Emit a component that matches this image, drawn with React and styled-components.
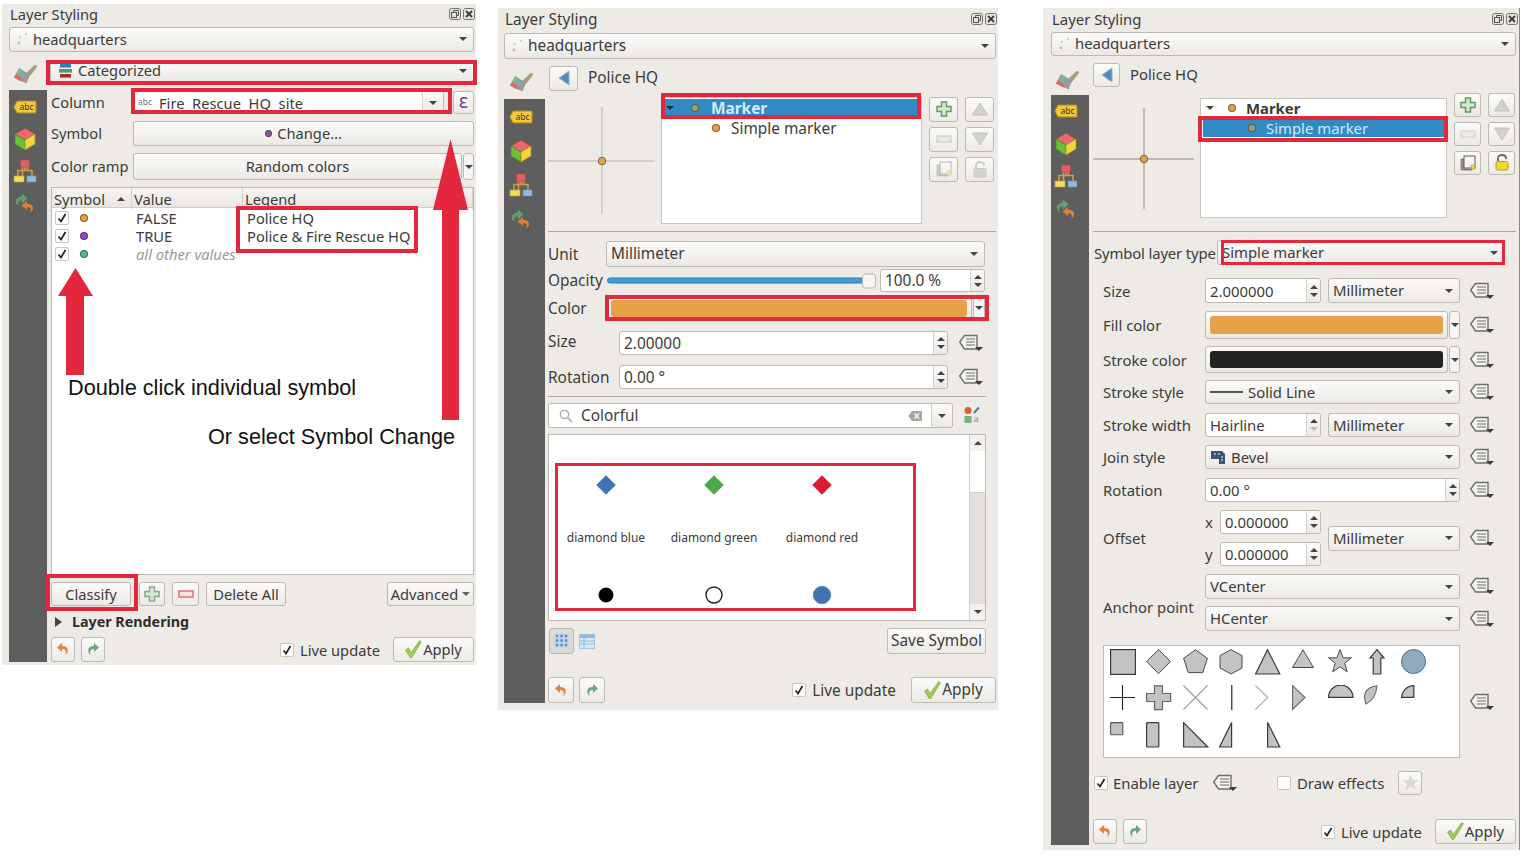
import React from 'react';
import styled, { createGlobalStyle } from 'styled-components';

const Global = createGlobalStyle`
  html, body { margin: 0; padding: 0; background: #ffffff; }
  body { font-family: "Noto Sans", "Open Sans", sans-serif; font-size: 14px; color: #3c3b37; }
  * { box-sizing: border-box; }
`;

const RED = '#e3273d';
const BORDER = '#bcb9b2';

const Canvas = styled.div`
  position: relative;
  width: 1527px;
  height: 863px;
  overflow: hidden;
`;

// each panel is a window on the free canvas
const Window = styled.section`
  position: absolute;
  left: ${p => p.$left}px;
  top: ${p => p.$top}px;
  width: ${p => p.$w}px;
  height: ${p => p.$h}px;
  padding: 0 ${p => p.$pr}px 0 ${p => p.$pl}px;
  background: #eeebe7;
  font-size: ${p => p.$fs}px;
  border-right: ${p => (p.$edge ? '1px solid #8d8a85' : 'none')};
`;

const TitleBar = styled.header`
  display: flex;
  align-items: center;
  justify-content: space-between;
  height: ${p => p.$h}px;
  padding-left: 1px;
  padding-bottom: 3px;
  color: #3c3b37;
`;

const DockIcons = styled.div`
  display: flex;
  gap: 2px;
  margin-right: ${p => p.$mr || 0}px;
`;

const Main = styled.div`
  display: grid;
  grid-template-columns: ${p => p.$side}px 1fr;
  grid-template-rows: ${p => p.$head}px auto;
  column-gap: ${p => p.$gap}px;
`;

const BrushCell = styled.div`
  display: flex;
  justify-content: center;
  padding-top: ${p => p.$top}px;
  padding-right: ${p => p.$shift}px;
`;

const Sidebar = styled.nav`
  display: flex;
  flex-direction: column;
  align-items: center;
  height: ${p => p.$h}px;
  margin-top: ${p => p.$mt || 0}px;
  padding-top: ${p => p.$pt}px;
  padding-right: ${p => p.$shift}px;
  background: #5e5e5e;
`;

const SideSlot = styled.div`
  display: flex;
  align-items: center;
  justify-content: center;
  height: ${p => p.$h}px;
`;

const Content = styled.div`
  display: flex;
  flex-direction: column;
  min-width: 0;
`;

const Row = styled.div`
  display: flex;
  align-items: stretch;
  height: ${p => p.$h}px;
  margin-top: ${p => p.$mt || 0}px;
  margin-right: ${p => p.$mr || 0}px;
  margin-left: ${p => p.$ml || 0}px;
  gap: ${p => p.$gap || 0}px;
`;

const Label = styled.div`
  display: flex;
  align-items: center;
  flex: none;
  width: ${p => (p.$w ? `${p.$w}px` : 'auto')};
  padding-bottom: ${p => p.$pb || 0}px;
  padding-top: ${p => p.$pt || 0}px;
  letter-spacing: ${p => p.$ls || 0}px;
  white-space: nowrap;
  color: #3c3b37;
`;

const Combo = styled.div`
  display: flex;
  align-items: center;
  flex: ${p => (p.$w ? 'none' : 1)};
  width: ${p => (p.$w ? `${p.$w}px` : 'auto')};
  min-width: 0;
  height: ${p => (p.$h ? `${p.$h}px` : 'auto')};
  padding: 0 6px ${p => p.$pb || 0}px ${p => p.$pl || 4}px;
  margin-left: ${p => p.$ml || 0}px;
  gap: ${p => p.$gap || 5}px;
  border: 1px solid ${BORDER};
  border-radius: 3px;
  background: linear-gradient(#fbfbfa, #ece9e5);
  white-space: nowrap;
  color: #3c3b37;
`;

const ComboText = styled.span`
  flex: 1;
  overflow: hidden;
  line-height: 1.5;
`;

const Caret = styled.i`
  flex: none;
  width: 0;
  height: 0;
  border-left: 4px solid transparent;
  border-right: 4px solid transparent;
  border-top: 4px solid ${p => p.$c || '#45433e'};
`;

const CaretUp = styled.i`
  flex: none;
  width: 0;
  height: 0;
  border-left: 4px solid transparent;
  border-right: 4px solid transparent;
  border-bottom: 4px solid ${p => p.$c || '#45433e'};
`;

const Btn = styled.div`
  display: flex;
  align-items: center;
  justify-content: center;
  flex: ${p => (p.$w ? 'none' : 1)};
  width: ${p => (p.$w ? `${p.$w}px` : 'auto')};
  margin-left: ${p => p.$ml || 0}px;
  padding-bottom: 1px;
  gap: ${p => p.$gap || 4}px;
  border: 1px solid ${BORDER};
  border-radius: 3px;
  background: ${p => (p.$on ? '#dcdad6' : 'linear-gradient(#fbfbfa, #ece9e5)')};
  white-space: nowrap;
  color: #3c3b37;
`;

const EpsilonBtn = styled(Btn)`
  font-size: 20px;
  line-height: 1;
  padding-bottom: 3px;
  color: #6e4c8e;
`;

const IconGrid = styled.div`
  display: grid;
  grid-template-columns: repeat(2, ${p => p.$w}px);
  grid-auto-rows: ${p => p.$h}px;
  column-gap: 7px;
  row-gap: ${p => p.$gap}px;
  margin-left: 7px;
`;

const SpinBox = styled.div`
  display: flex;
  flex: ${p => (p.$w ? 'none' : 1)};
  width: ${p => (p.$w ? `${p.$w}px` : 'auto')};
  min-width: 0;
  margin-left: ${p => p.$ml || 0}px;
  border: 1px solid ${BORDER};
  border-radius: 3px;
  background: #ffffff;
  color: #3c3b37;
`;

const SpinText = styled.div`
  display: flex;
  align-items: center;
  flex: 1;
  padding-left: 4px;
  gap: ${p => p.$gap || 0}px;
  white-space: pre;
`;

const SpinArrows = styled.div`
  display: flex;
  flex-direction: column;
  align-items: center;
  justify-content: center;
  gap: 4px;
  flex: none;
  width: 14px;
  border-left: 1px solid #d5d2cc;
  background: linear-gradient(#fbfbfa, #ece9e5);
  border-radius: 0 3px 3px 0;
`;

const ColorBtn = styled.div`
  display: flex;
  flex: 1;
  padding: ${p => p.$pad || '4px'};
  border: 1px solid ${BORDER};
  border-radius: 3px;
  background: linear-gradient(#fbfbfa, #ece9e5);
`;

const Swatch = styled.div`
  flex: 1;
  border-radius: 3px;
  background: ${p => p.$c};
`;

const ColorDrop = styled.div`
  display: flex;
  align-items: center;
  justify-content: center;
  flex: none;
  width: ${p => p.$w}px;
  margin-left: 1px;
  border: 1px solid ${BORDER};
  border-radius: 3px;
  background: #f6f5f3;
`;

const DdSlot = styled.div`
  display: flex;
  align-items: center;
  flex: none;
  margin-left: ${p => p.$ml || 10}px;
`;

const Check = styled.span`
  display: inline-flex;
  align-items: center;
  justify-content: center;
  flex: none;
  width: 14px;
  height: 14px;
  margin-left: ${p => p.$ml || 0}px;
  border: 1px solid #c9c6c0;
  border-radius: 2px;
  background: #ffffff;
`;

const Footer = styled(Row)`
  align-items: stretch;
`;

const FooterSpacer = styled.div`
  flex: 1;
`;

const LiveLabel = styled.label`
  display: flex;
  align-items: center;
  gap: 6px;
  margin-right: ${p => p.$mr}px;
  white-space: nowrap;
  color: #3c3b37;
`;

const Separator = styled.hr`
  height: 1px;
  margin: ${p => p.$mt}px ${p => p.$mr || 0}px 0 0;
  border: 0;
  background: #aaa8a3;
`;

/* categorized table */
const Table = styled.div`
  height: 388px;
  margin-top: 7px;
  border: 1px solid ${BORDER};
  background: #ffffff;
`;

const TableHead = styled.div`
  display: grid;
  grid-template-columns: 80px 111px 1fr;
  height: 20px;
  background: linear-gradient(#f6f5f3, #e9e6e2);
  border-bottom: 1px solid #cfccc6;
`;

const HeadCell = styled.div`
  display: flex;
  align-items: center;
  justify-content: space-between;
  padding: 1px 6px 0 2px;
  border-right: 1px solid #d5d2cc;
`;

const TableRow = styled.div`
  display: grid;
  grid-template-columns: 80px 111px 1fr;
  height: 18px;
  align-items: center;
`;

const SymbolCell = styled.div`
  display: flex;
  align-items: center;
  gap: 11px;
  padding-left: 3px;
`;

const ValueCell = styled.div`
  padding-left: 4px;
  white-space: nowrap;
  font-style: ${p => (p.$muted ? 'italic' : 'normal')};
  color: ${p => (p.$muted ? '#9b9994' : '#3c3b37')};
`;

const Dot = styled.span`
  display: inline-block;
  flex: none;
  width: ${p => p.$s || 7}px;
  height: ${p => p.$s || 7}px;
  margin-left: ${p => p.$ml || 0}px;
  border-radius: 50%;
  border: 1px solid rgba(50, 40, 30, 0.55);
  background: ${p => p.$c};
`;

const Section = styled.div`
  display: flex;
  align-items: center;
  gap: 10px;
  padding-left: 4px;
  padding-bottom: 1px;
  font-weight: 700;
  font-size: 14.3px;
  color: #2f2e2a;
`;

const TriRight = styled.i`
  width: 0;
  height: 0;
  border-top: 5px solid transparent;
  border-bottom: 5px solid transparent;
  border-left: 7px solid #45433e;
`;

/* symbol tree */
const TopBlock = styled.div`
  display: flex;
  align-items: flex-start;
`;

const Preview = styled.div`
  flex: none;
  width: ${p => p.$w}px;
  height: ${p => p.$h}px;
  margin-top: ${p => p.$mt}px;
`;

const Tree = styled.div`
  flex: none;
  width: ${p => p.$w}px;
  height: ${p => p.$h}px;
  margin-top: ${p => p.$mt || 0}px;
  margin-left: 6px;
  padding-top: ${p => p.$pt}px;
  border: 1px solid #c9c6c0;
  background: #ffffff;
`;

const TreeRow = styled.div`
  display: flex;
  align-items: center;
  height: ${p => p.$h}px;
  margin: ${p => p.$m || 0};
  padding-left: ${p => p.$pl}px;
  gap: ${p => p.$gap || 8}px;
  background: ${p => (p.$sel ? '#2f8ac6' : 'transparent')};
  color: ${p => (p.$sel ? '#d5eafa' : '#3c3b37')};
  font-weight: ${p => (p.$bold ? 700 : 400)};
`;

const TreeName = styled.span`
  margin-left: ${p => p.$ml}px;
`;

/* symbol list */
const SearchIcons = styled.div`
  display: flex;
  align-items: center;
  gap: 8px;
  flex: 1;
  padding: 0 8px 0 10px;
`;

const SearchDrop = styled.div`
  display: flex;
  align-items: center;
  justify-content: center;
  flex: none;
  width: 21px;
  border-left: 1px solid #d5d2cc;
  background: linear-gradient(#fbfbfa, #ece9e5);
  border-radius: 0 3px 3px 0;
`;

const SymbolList = styled.div`
  display: flex;
  height: 187px;
  margin-top: 6px;
  margin-right: 10px;
  border: 1px solid ${BORDER};
  background: #ffffff;
  overflow: hidden;
`;

const SymbolGrid = styled.div`
  flex: 1;
  display: grid;
  grid-template-columns: repeat(3, 108px);
  align-content: start;
  row-gap: 38px;
  padding: 40px 0 0 3px;
`;

const SymbolCellBox = styled.div`
  display: flex;
  flex-direction: column;
  align-items: center;
`;

const SymbolName = styled.div`
  height: 18px;
  margin-top: 34px;
  font-size: 12px;
  line-height: 18px;
  white-space: nowrap;
`;

const Scroll = styled.div`
  display: flex;
  flex-direction: column;
  flex: none;
  width: 16px;
  border-left: 1px solid #d5d2cc;
  background: #e2e0dc;
`;

const ScrollEnd = styled.div`
  display: flex;
  align-items: center;
  justify-content: center;
  height: 16px;
  background: #f3f2f0;
`;

const ScrollThumb = styled.div`
  height: 42px;
  background: #ffffff;
  border-bottom: 1px solid #cfccc6;
`;

const ScrollTrack = styled.div`
  flex: 1;
`;

/* marker properties */
const PropRow = styled.div`
  display: grid;
  grid-template-columns: 102px 255px 34px;
  align-items: stretch;
  height: ${p => p.$h}px;
  margin-top: ${p => p.$mt}px;
  margin-left: 10px;
`;

const Fields = styled.div`
  display: flex;
  gap: ${p => p.$gap || 0}px;
  min-width: 0;
`;

const FieldStack = styled.div`
  display: flex;
  flex-direction: column;
  justify-content: space-between;
  width: 116px;
  flex: none;
`;

const StackRow = styled.div`
  display: flex;
  height: 24px;
`;

const StackLetter = styled.span`
  display: flex;
  align-items: center;
  width: 15px;
`;

const ColumnStack = styled.div`
  display: flex;
  flex-direction: column;
  justify-content: space-between;
`;

const StackedField = styled.div`
  display: flex;
  height: 25px;
`;

const CenterUnit = styled.div`
  display: flex;
  align-items: center;
  flex: 1;
  margin-left: 7px;
`;

const DdColumn = styled.div`
  display: flex;
  flex-direction: column;
  justify-content: space-between;
  padding: 3px 0;
  margin-left: 10px;
`;

const ShapeGrid = styled.div`
  display: grid;
  grid-template-columns: repeat(9, 36.33px);
  grid-auto-rows: 36.33px;
  flex: none;
  width: 357px;
  padding: 3px 0 0 6px;
  border: 1px solid ${BORDER};
  background: #ffffff;
`;

const EnableRow = styled(Row)`
  align-items: center;
  padding-left: 1px;
`;

const OptionText = styled.span`
  flex: none;
  width: ${p => p.$w}px;
  margin-left: ${p => p.$ml || 0}px;
  white-space: nowrap;
`;

const SmallBtn = styled(Btn)`
  height: 24px;
`;

/* red annotations drawn over the panels */
const Highlight = styled.div`
  position: absolute;
  left: ${p => p.$x}px;
  top: ${p => p.$y}px;
  width: ${p => p.$w}px;
  height: ${p => p.$h}px;
  border: ${p => p.$b || 3}px solid ${RED};
  pointer-events: none;
`;

const Note = styled.div`
  position: absolute;
  left: ${p => p.$x}px;
  top: ${p => p.$y}px;
  font-family: "Liberation Sans", Arial, sans-serif;
  font-size: 21.7px;
  line-height: 26px;
  color: #111111;
  white-space: nowrap;
`;

const ArrowSvg = styled.svg`
  position: absolute;
  left: 0;
  top: 0;
  pointer-events: none;
`;

/* icons */
const DockFloat = () => (
  <svg width="12" height="12" viewBox="0 0 12 12">
    <rect x="0.5" y="0.5" width="11" height="11" rx="2" fill="#e6e4df" stroke="#77756f" />
    <rect x="2.5" y="4.5" width="5" height="5" fill="none" stroke="#55534e" />
    <path d="M4.5 4.5V2.5H9.5V7.5H7.5" fill="none" stroke="#55534e" />
  </svg>
);

const DockClose = () => (
  <svg width="12" height="12" viewBox="0 0 12 12">
    <rect x="0.5" y="0.5" width="11" height="11" rx="2" fill="#e6e4df" stroke="#77756f" />
    <path d="M3 3L9 9M9 3L3 9" stroke="#3c3b37" strokeWidth="1.8" />
  </svg>
);

const PointsIcon = () => (
  <svg width="14" height="14" viewBox="0 0 14 14">
    <circle cx="3" cy="11" r="1.4" fill="#bdbbb6" />
    <circle cx="4" cy="5" r="1.1" fill="#c8c6c1" />
    <circle cx="10" cy="2" r="1.1" fill="#c8c6c1" />
  </svg>
);

const BrushIcon = () => (
  <svg width="24" height="20" viewBox="0 0 24 20">
    <path d="M13.5 9L22 1L24 2.5L16.5 12Z" fill="#a99f73" stroke="#8b8160" strokeWidth="0.5" />
    <path d="M1 13.5L6 4L17 11L13.5 19.5Z" fill="#a19d92" />
    <path d="M1 13.5L3.4 9.2L10.5 16.5L8 17.5Z" fill="#d66a6c" />
    <path d="M3.4 9.2L6 4L9.5 6.2L7.5 12.5Z" fill="#7dba7c" />
    <path d="M9.5 6.2L13.5 8.7L10.5 12.5L7.5 12.5Z" fill="#78a3cc" />
  </svg>
);

const AbcIcon = () => (
  <svg width="24" height="14" viewBox="0 0 24 14">
    <path d="M4 1H23V13H4L0.8 7Z" fill="#f2c83a" stroke="#a98a1c" />
    <text x="13.5" y="10" fontSize="8.5" fontFamily="Noto Sans, sans-serif" textAnchor="middle" fill="#3a3520">abc</text>
  </svg>
);

const CubeIcon = () => (
  <svg width="22" height="24" viewBox="0 0 22 24">
    <path d="M11 1L21 7L11 13L1 7Z" fill="#ec6a6f" stroke="#8f4a42" strokeWidth="0.8" />
    <path d="M1 7L11 13V23L1 17Z" fill="#6cc13a" stroke="#4e8a2b" strokeWidth="0.8" />
    <path d="M21 7L11 13V23L21 17Z" fill="#f1d73c" stroke="#a8962a" strokeWidth="0.8" />
  </svg>
);

const TreeIcon = () => (
  <svg width="24" height="24" viewBox="0 0 24 24">
    <path d="M12 8V11M5 18V11.5H19V18M9.5 8V18M14.5 8V11.5" fill="none" stroke="#d19a55" strokeWidth="1.6" />
    <rect x="7.5" y="1" width="9" height="7" fill="#e35d62" stroke="#b04a4a" strokeWidth="0.6" />
    <rect x="1" y="17" width="10" height="6" fill="#f2dc58" stroke="#b5a53a" strokeWidth="0.6" />
    <rect x="14" y="17" width="9" height="6" fill="#8db9e3" stroke="#6a8fb2" strokeWidth="0.6" />
  </svg>
);

const HistoryIcon = () => (
  <svg width="22" height="20" viewBox="0 0 22 20">
    <path d="M8 0.5L13.5 5.5L8 10.5V7.5C5 7.5 3.5 9 4.5 13.5C1 11 0 4 8 3.5Z" fill="#5f9e6e" />
    <path d="M13 8L7.5 12.5L13 17V14.3C16 14.3 17.5 15.5 16.5 19.5C20 17.5 21 11 13 10.8Z" fill="#dd7f35" />
  </svg>
);

const SideIcons = ({ h }) => (
  <>
    <SideSlot $h={h}><AbcIcon /></SideSlot>
    <SideSlot $h={h}><CubeIcon /></SideSlot>
    <SideSlot $h={h}><TreeIcon /></SideSlot>
    <SideSlot $h={h}><HistoryIcon /></SideSlot>
  </>
);

const DdIcon = () => (
  <svg width="24" height="18" viewBox="0 0 24 18">
    <path d="M0.7 8L5.5 1.5H18V15H5.5Z" fill="#f3f2ef" stroke="#6f6d68" strokeWidth="1.4" />
    <path d="M7 5H16M7 8H16M7 11H16" stroke="#6f6d68" />
    <path d="M16 13H24L20 17Z" fill="#3c3b37" />
  </svg>
);

const PlusIcon = ({ c = '#86ad88', f = '#d4e8d4' }) => (
  <svg width="16" height="16" viewBox="0 0 16 16">
    <path d="M5.5 1H10.5V5.5H15V10.5H10.5V15H5.5V10.5H1V5.5H5.5Z" fill={f} stroke={c} strokeWidth="1.5" />
  </svg>
);

const MinusIcon = ({ c = '#e06a70', f = '#f8dfe0' }) => (
  <svg width="16" height="8" viewBox="0 0 16 8">
    <rect x="1" y="1" width="14" height="6" fill={f} stroke={c} strokeWidth="1.4" />
  </svg>
);

const BigTri = ({ down }) => (
  <svg width="16" height="14" viewBox="0 0 16 14">
    <path d={down ? 'M0.5 1H15.5L8 13Z' : 'M8 1L15.5 13H0.5Z'} fill="#d3d1cc" stroke="#c4c2bc" />
  </svg>
);

const CopyIcon = ({ faded }) => (
  <svg width="16" height="16" viewBox="0 0 16 16" opacity={faded ? 0.4 : 1}>
    <path d="M1 4H4V14H12V15H1Z" fill="#9a9892" stroke="#5e5c57" strokeWidth="0.6" />
    <rect x="4" y="1" width="11" height="12" fill="#f7f6f4" stroke="#5e5c57" />
    <rect x="11" y="10" width="4" height="4" fill="#f0d84a" stroke="#a8962a" strokeWidth="0.6" />
  </svg>
);

const LockIcon = ({ faded }) => (
  <svg width="14" height="17" viewBox="0 0 14 17">
    <path d="M3 7V4C3 2 5 1 7 1C9 1 11 2 11 4V5" fill="none" stroke={faded ? '#cfcdc8' : '#6a675f'} strokeWidth="1.8" />
    <rect x="1" y="7.5" width="12" height="8.5" rx="1.5" fill={faded ? '#d5d3cd' : '#f3d62e'} stroke={faded ? '#c8c6c0' : '#b59e1c'} />
  </svg>
);

const BackIcon = () => (
  <svg width="12" height="16" viewBox="0 0 12 16">
    <path d="M11 1V15L1 8Z" fill="#4e8bc4" stroke="#9ab4c9" />
  </svg>
);

const CheckMark = ({ s = 10 }) => (
  <svg width={s} height={s} viewBox="0 0 10 10">
    <path d="M1.5 5.5L4 8.5L8.5 1" fill="none" stroke="#222222" strokeWidth="1.7" />
  </svg>
);

const Tick = () => (
  <Check>
    <CheckMark />
  </Check>
);

const UndoIcon = () => (
  <svg width="14" height="14" viewBox="0 0 14 14">
    <path d="M6 1L1 5.5L6 10V7C9 7 10.5 8.5 9.5 13C12.5 10.5 13.5 4 6 4Z" fill="#e58138" />
  </svg>
);

const RedoIcon = () => (
  <svg width="14" height="14" viewBox="0 0 14 14">
    <path d="M8 1L13 5.5L8 10V7C5 7 3.5 8.5 4.5 13C1.5 10.5 0.5 4 8 4Z" fill="#6aaa78" />
  </svg>
);

const ApplyIcon = () => (
  <svg width="17" height="18" viewBox="0 0 15 16">
    <path d="M0.5 9L3 7L5.5 11L13 0.5L14.5 1.5L6 15.5H4.5Z" fill="#9ccc52" stroke="#7fa53f" strokeWidth="0.6" />
  </svg>
);

const CategorizedIcon = () => (
  <svg width="14" height="14" viewBox="0 0 14 14">
    <rect x="1" y="0" width="11" height="3.6" fill="#2f7fc1" />
    <rect x="0" y="5" width="13" height="3.6" fill="#3ea45e" />
    <rect x="1" y="10" width="11" height="3.6" fill="#b02a2a" />
  </svg>
);

const AbcMini = () => (
  <svg width="18" height="11" viewBox="0 0 18 11">
    <text x="0" y="8" fontSize="8.5" fontFamily="Noto Sans, sans-serif" fill="#77756f">abc</text>
  </svg>
);

const Crosshair = ({ w, h, cx, cy, c = '#b5b3ad' }) => (
  <svg width={w} height={h} viewBox={`0 0 ${w} ${h}`}>
    <path d={`M${cx} 0V${h}M0 ${cy}H${w}`} stroke={c} strokeWidth="1" />
    <circle cx={cx} cy={cy} r="3.8" fill="#e5a045" stroke="#5f5340" strokeWidth="0.8" />
  </svg>
);

const SearchGlass = () => (
  <svg width="14" height="14" viewBox="0 0 14 14">
    <circle cx="5.5" cy="5.5" r="4.2" fill="none" stroke="#a9a7a2" strokeWidth="1.2" />
    <path d="M8.7 8.7L13 13" stroke="#a9a7a2" strokeWidth="1.6" />
  </svg>
);

const ClearIcon = () => (
  <svg width="15" height="12" viewBox="0 0 15 12">
    <path d="M4 1H14V11H4L0.5 6Z" fill="#a8a6a1" />
    <path d="M6.5 3.5L11 8.5M11 3.5L6.5 8.5" stroke="#ffffff" strokeWidth="1.3" />
  </svg>
);

const StyleMgrIcon = () => (
  <svg width="18" height="20" viewBox="0 0 18 20">
    <circle cx="5" cy="4.5" r="3.5" fill="#d4622f" />
    <path d="M11 7L16 1.5" stroke="#3f7fb8" strokeWidth="2" />
    <rect x="1.5" y="10" width="7" height="7" fill="#76b27e" />
    <text x="13" y="16" fontSize="9" fontFamily="Noto Sans, sans-serif" textAnchor="middle" fill="#8f8d88">a</text>
  </svg>
);

const GridViewIcon = () => (
  <svg width="15" height="15" viewBox="0 0 15 15">
    <rect x="0.5" y="0.5" width="14" height="14" rx="1" fill="#bcd6ef" />
    {[3, 7.5, 12].map(x =>
      [3, 7.5, 12].map(y => <rect key={`${x}-${y}`} x={x - 1.2} y={y - 1.2} width="2.4" height="2.4" fill="#4f8fcb" />)
    )}
  </svg>
);

const ListViewIcon = () => (
  <svg width="16" height="15" viewBox="0 0 16 15">
    <rect x="0.5" y="0.5" width="15" height="14" fill="#d8e7f5" stroke="#a9c6e0" />
    <rect x="0.5" y="0.5" width="15" height="3.5" fill="#8db9e0" />
    <path d="M1 7H15M1 10H15M5 4V14" stroke="#8db9e0" />
  </svg>
);

const DiamondIcon = ({ c, e }) => (
  <svg width="20" height="20" viewBox="0 0 20 20">
    <path d="M10 0.7L19.3 10L10 19.3L0.7 10Z" fill={c} stroke={e} strokeWidth="0.8" />
  </svg>
);

const CircleIcon = ({ c, e, r, sw = 1 }) => (
  <svg width="20" height="20" viewBox="0 0 20 20">
    <circle cx="10" cy="10" r={r} fill={c} stroke={e} strokeWidth={sw} />
  </svg>
);

const LineSample = () => (
  <svg width="33" height="4" viewBox="0 0 33 4">
    <path d="M0 2H33" stroke="#222222" strokeWidth="1.4" />
  </svg>
);

const BevelIcon = () => (
  <svg width="16" height="15" viewBox="0 0 16 15">
    <path d="M1 1H12L15 4V14H9V9H1Z" fill="#33558a" />
    <path d="M4 4H6M8 4H10M11 7H13M11 10H13" stroke="#e6c93a" strokeWidth="1.5" />
  </svg>
);

const StarBtnIcon = () => (
  <svg width="15" height="15" viewBox="0 0 24 24">
    <path d="M12 1L15 9H23L16.5 14L19 22L12 17L5 22L7.5 14L1 9H9Z" fill="#dad8d2" stroke="#d0cec8" />
  </svg>
);

const SHAPE_FILL = '#c3c3c3';
const SHAPE_EDGE = '#3a3a3a';
const filled = { fill: SHAPE_FILL, stroke: SHAPE_EDGE, strokeWidth: 1.2 };

const shapes = [
  <rect x="0.6" y="0.6" width="24.8" height="24.8" {...filled} />,
  <path d="M12.5 0.6L24.6 12.5L12.5 24.6L0.6 12.5Z" {...filled} strokeWidth="0.9" />,
  <path d="M12.5 0.8L24.4 9.3L19.8 23.6H5.2L0.6 9.3Z" {...filled} strokeWidth="0.9" />,
  <path d="M12 0.6L23 6.6V19L12 25L1 19V6.6Z" {...filled} strokeWidth="0.9" />,
  <path d="M12.5 0.8L24.8 25H0.6Z" {...filled} />,
  <path d="M11 0.8L21.5 18.5H0.5Z" {...filled} strokeWidth="0.9" />,
  <path d="M12 0.6L15 8.8H23.4L16.7 14.2L19.2 22.8L12 17.9L4.7 22.8L7.2 14.2L0.5 8.8H8.9Z" {...filled} strokeWidth="0.9" />,
  <path d="M13 0.6L20 9H16.8V25H9.2V9H6Z" {...filled} />,
  <circle cx="12.5" cy="12.5" r="12" fill="#8fabc0" stroke="#4f708c" strokeWidth="1" />,
  <path d="M12.5 0V25M0 12.5H25" stroke="#222222" strokeWidth="1.1" fill="none" />,
  <path d="M8.5 0.8H16.5V8.5H24.6V16.5H16.5V24.6H8.5V16.5H0.6V8.5H8.5Z" fill={SHAPE_FILL} stroke="#666666" strokeWidth="1.2" />,
  <path d="M0.5 0.5L24.5 24.5M24.5 0.5L0.5 24.5" stroke="#9a9a9a" strokeWidth="1.1" fill="none" />,
  <path d="M12.8 0V25" stroke="#111111" strokeWidth="1.1" fill="none" />,
  <path d="M0.5 0.5L12.8 12.5L0.5 24.5" stroke="#aaaaaa" strokeWidth="1.1" fill="none" />,
  <path d="M0.6 0.6L13 12.5L0.6 24.5Z" fill={SHAPE_FILL} stroke="#666666" strokeWidth="1.1" />,
  <path d="M0.5 12.4A12.2 12.2 0 0 1 25 12.4Z" {...filled} />,
  <path d="M13 0.8Q3 2 1 9Q0 14 2 19Q12 14 13 0.8Z" fill={SHAPE_FILL} stroke="#666666" strokeWidth="1.1" />,
  <path d="M12.8 0.6A12.4 12.4 0 0 0 0.6 12.4H12.8Z" {...filled} />,
  <rect x="0.6" y="0.6" width="12.2" height="12.2" rx="0.8" fill={SHAPE_FILL} stroke="#555555" strokeWidth="1.1" />,
  <rect x="0.6" y="0.6" width="12.2" height="24.4" rx="0.8" {...filled} />,
  <path d="M0.6 0.6L24.8 25H0.6Z" {...filled} />,
  <path d="M12.6 0.6V25H0.6Z" {...filled} />,
  <path d="M12.6 0.6L24.8 25H12.6Z" {...filled} />,
];

const ShapeCells = () => (
  <>
    {shapes.map((shape, i) => (
      <svg key={i} width="26" height="26" viewBox="0 0 26 26">
        {shape}
      </svg>
    ))}
  </>
);

const Select = ({ children, ...rest }) => (
  <Combo {...rest}>
    <ComboText>{children}</ComboText>
    <Caret />
  </Combo>
);

const Spin = ({ children, dim, ...rest }) => (
  <SpinBox {...rest}>
    <SpinText>{children}</SpinText>
    <SpinArrows>
      <CaretUp />
      <Caret $c={dim ? '#bdbbb6' : undefined} />
    </SpinArrows>
  </SpinBox>
);

const BottomBar = ({ h, mt, live, undoW, gap, applyW }) => (
  <Footer $h={h} $mt={mt} $gap={gap}>
    <Btn $w={undoW}><UndoIcon /></Btn>
    <Btn $w={undoW}><RedoIcon /></Btn>
    <FooterSpacer />
    <LiveLabel $mr={live - gap}>
      <Tick />
      Live update
    </LiveLabel>
    <Btn $w={applyW} $gap={1}>
      <ApplyIcon />
      Apply
    </Btn>
  </Footer>
);

const Head = ({ titleH, comboH, pr }) => (
  <>
    <TitleBar $h={titleH}>
      Layer Styling
      <DockIcons $mr={pr}>
        <DockFloat />
        <DockClose />
      </DockIcons>
    </TitleBar>
    <Combo $h={comboH} $pl={6} $pb={1} $gap={3}>
      <PointsIcon />
      <ComboText>headquarters</ComboText>
      <Caret />
    </Combo>
  </>
);

const CategorizedPanel = () => (
  <Window $left={2} $top={4} $w={474} $h={661} $pl={7} $pr={2} $fs={14.7}>
    <Head titleH={23} comboH={25} pr={-1} />
    <Main $side={38} $head={38} $gap={4}>
      <BrushCell $top={12} $shift={6}><BrushIcon /></BrushCell>
      <Row $h={22} $mt={8}>
        <Combo $pl={8} $pb={1} $ml={-1}>
          <CategorizedIcon />
          <ComboText>Categorized</ComboText>
          <Caret />
        </Combo>
      </Row>
      <Sidebar $h={572} $pt={1} $shift={7}><SideIcons h={32} /></Sidebar>
      <Content>
        <Row $h={23} $mt={1}>
          <Label $w={82} $pb={1}>Column</Label>
          <SpinBox>
            <SpinText $gap={3}>
              <AbcMini />
              {'Fire  Rescue  HQ  site'}
            </SpinText>
            <SearchDrop><Caret /></SearchDrop>
          </SpinBox>
          <EpsilonBtn $w={21} $ml={9}>ε</EpsilonBtn>
        </Row>
        <Row $h={25} $mt={7}>
          <Label $w={82} $pb={1}>Symbol</Label>
          <Btn $gap={5}><Dot $c="#8b5a9c" />Change…</Btn>
        </Row>
        <Row $h={27} $mt={7}>
          <Label $w={82} $pb={1}>Color ramp</Label>
          <Btn>Random colors</Btn>
          <ColorDrop $w={11}><Caret /></ColorDrop>
        </Row>
        <Table>
          <TableHead>
            <HeadCell>Symbol<CaretUp /></HeadCell>
            <HeadCell>Value</HeadCell>
            <HeadCell>Legend</HeadCell>
          </TableHead>
          <TableRow>
            <SymbolCell><Tick /><Dot $c="#e5a045" $s={8} /></SymbolCell>
            <ValueCell>FALSE</ValueCell>
            <ValueCell>Police HQ</ValueCell>
          </TableRow>
          <TableRow>
            <SymbolCell><Tick /><Dot $c="#9a45c4" $s={8} /></SymbolCell>
            <ValueCell>TRUE</ValueCell>
            <ValueCell>Police &amp; Fire Rescue HQ</ValueCell>
          </TableRow>
          <TableRow>
            <SymbolCell><Tick /><Dot $c="#4fb88c" $s={8} /></SymbolCell>
            <ValueCell $muted>all other values</ValueCell>
          </TableRow>
        </Table>
        <Row $h={24} $mt={7}>
          <Btn $w={80}>Classify</Btn>
          <Btn $w={26} $ml={8}><PlusIcon /></Btn>
          <Btn $w={27} $ml={7}><MinusIcon /></Btn>
          <Btn $w={80} $ml={7}>Delete All</Btn>
          <FooterSpacer />
          <Btn $w={87} $gap={4}>Advanced <Caret $c="#66645f" /></Btn>
        </Row>
        <Row $h={18} $mt={7}>
          <Section><TriRight />Layer Rendering</Section>
        </Row>
        <BottomBar h={25} mt={6} live={13} undoW={24} gap={6} applyW={81} />
      </Content>
    </Main>
  </Window>
);

const MarkerPanel = () => (
  <Window $left={498} $top={8} $w={500} $h={702} $pl={6} $pr={2} $fs={15.4}>
    <Head titleH={25} comboH={26} pr={-1} />
    <Main $side={41} $head={38} $gap={3}>
      <BrushCell $top={13} $shift={7}><BrushIcon /></BrushCell>
      <Row $h={25} $mt={7} $gap={10}>
        <Btn $w={29} $ml={1}><BackIcon /></Btn>
        <Label $pb={2}>Police HQ</Label>
      </Row>
      <Sidebar $h={604} $mt={2} $pt={1} $shift={7}><SideIcons h={34} /></Sidebar>
      <Content>
        <TopBlock>
          <Preview $w={107} $h={107} $mt={10}>
            <Crosshair w={107} h={107} cx={54} cy={54} />
          </Preview>
          <Tree $w={261} $h={127} $pt={1}>
            <TreeRow $h={18} $pl={4} $sel>
              <Caret $c="#1d2b3a" />
              <Dot $c="#a89a6e" $s={8} $ml={9} />
              <TreeName $ml={4}><b>Marker</b></TreeName>
            </TreeRow>
            <TreeRow $h={22} $pl={50} $gap={11}>
              <Dot $c="#e5a045" $s={8} />
              Simple marker
            </TreeRow>
          </Tree>
          <IconGrid $w={29} $h={25} $gap={5}>
            <Btn><PlusIcon c="#5d9c5d" /></Btn>
            <Btn><BigTri /></Btn>
            <Btn><MinusIcon c="#d5d3cd" f="#e6e4df" /></Btn>
            <Btn><BigTri down /></Btn>
            <Btn><CopyIcon faded /></Btn>
            <Btn><LockIcon faded /></Btn>
          </IconGrid>
        </TopBlock>
        <Separator $mt={7} />
        <Row $h={26} $mt={9} $mr={11}>
          <Label $w={58}>Unit</Label>
          <Select>Millimeter</Select>
        </Row>
        <Row $h={23} $mt={2} $mr={11}>
          <Label $w={59}>Opacity</Label>
          <svg width="273" height="23" viewBox="0 0 273 23">
            <rect x="0.5" y="9" width="258" height="5" rx="2.5" fill="#3f9fdc" stroke="#2f78a8" />
            <rect x="255.5" y="5" width="13" height="14" rx="3" fill="#f6f5f3" stroke="#bcb9b2" />
          </svg>
          <Spin $ml={0}>100.0 %</Spin>
        </Row>
        <Row $h={26} $mt={3} $mr={11}>
          <Label $w={58}>Color</Label>
          <ColorBtn $pad="4px 4px 3px 4px"><Swatch $c="#e5a148" /></ColorBtn>
          <ColorDrop $w={12}><Caret /></ColorDrop>
        </Row>
        <Row $h={24} $mt={10} $mr={13}>
          <Label $w={71} $pb={4}>Size</Label>
          <Spin>2.00000</Spin>
          <DdSlot $ml={11}><DdIcon /></DdSlot>
        </Row>
        <Row $h={24} $mt={10} $mr={13}>
          <Label $w={71}>Rotation</Label>
          <Spin>0.00 °</Spin>
          <DdSlot $ml={11}><DdIcon /></DdSlot>
        </Row>
        <Separator $mt={7} $mr={10} />
        <Row $h={25} $mt={6} $mr={11}>
          <SpinBox $w={405}>
            <SearchIcons>
              <SearchGlass />
              <ComboText>Colorful</ComboText>
              <ClearIcon />
            </SearchIcons>
            <SearchDrop><Caret /></SearchDrop>
          </SpinBox>
          <DdSlot $ml={10}><StyleMgrIcon /></DdSlot>
        </Row>
        <SymbolList>
          <SymbolGrid>
            <SymbolCellBox>
              <DiamondIcon c="#3d75b4" e="#37669c" />
              <SymbolName>diamond blue</SymbolName>
            </SymbolCellBox>
            <SymbolCellBox>
              <DiamondIcon c="#4bab46" e="#3f9240" />
              <SymbolName>diamond green</SymbolName>
            </SymbolCellBox>
            <SymbolCellBox>
              <DiamondIcon c="#dc1e2c" e="#a71e28" />
              <SymbolName>diamond red</SymbolName>
            </SymbolCellBox>
            <SymbolCellBox><CircleIcon c="#000000" e="#000000" r={7} /></SymbolCellBox>
            <SymbolCellBox><CircleIcon c="#ffffff" e="#222222" r={8} sw={1.4} /></SymbolCellBox>
            <SymbolCellBox><CircleIcon c="#4273ae" e="#5f88b8" r={8.7} /></SymbolCellBox>
          </SymbolGrid>
          <Scroll>
            <ScrollEnd><CaretUp /></ScrollEnd>
            <ScrollThumb />
            <ScrollTrack />
            <ScrollEnd><Caret /></ScrollEnd>
          </Scroll>
        </SymbolList>
        <Row $h={26} $mt={7} $mr={10}>
          <Btn $w={25} $ml={1} $on><GridViewIcon /></Btn>
          <DdSlot $ml={5}><ListViewIcon /></DdSlot>
          <FooterSpacer />
          <Btn $w={99}>Save Symbol</Btn>
        </Row>
        <BottomBar h={26} mt={23} live={15} undoW={26} gap={5} applyW={85} />
      </Content>
    </Main>
  </Window>
);

const SimplePanel = () => (
  <Window $left={1043} $top={8} $w={477} $h={842} $pl={8} $pr={3} $edge $fs={14.9}>
    <Head titleH={24} comboH={24} pr={-2} />
    <Main $side={38} $head={37} $gap={4}>
      <BrushCell $top={14} $shift={7}><BrushIcon /></BrushCell>
      <Row $h={24} $mt={7} $gap={10}>
        <Btn $w={27}><BackIcon /></Btn>
        <Label $pb={2}>Police HQ</Label>
      </Row>
      <Sidebar $h={750} $mt={2} $pt={0} $shift={8}><SideIcons h={32.5} /></Sidebar>
      <Content>
        <TopBlock>
          <Preview $w={101} $h={101} $mt={15}>
            <Crosshair w={101} h={101} cx={51} cy={51} c="#8e8c87" />
          </Preview>
          <Tree $w={247} $h={120} $mt={5} $pt={0}>
            <TreeRow $h={18} $pl={5} $bold>
              <Caret $c="#45433e" />
              <Dot $c="#e5a045" $s={8} $ml={6} />
              <TreeName $ml={2}>Marker</TreeName>
            </TreeRow>
            <TreeRow $h={19} $pl={45} $gap={10} $sel $m="1px 2px 0">
              <Dot $c="#a89a6e" $s={8} />
              Simple marker
            </TreeRow>
          </Tree>
          <IconGrid $w={27} $h={24} $gap={5}>
            <Btn><PlusIcon c="#5d9c5d" /></Btn>
            <Btn><BigTri /></Btn>
            <Btn><MinusIcon c="#e9cfd0" f="#eeeae6" /></Btn>
            <Btn><BigTri down /></Btn>
            <Btn><CopyIcon /></Btn>
            <Btn><LockIcon /></Btn>
          </IconGrid>
        </TopBlock>
        <Separator $mt={13} />
        <Row $h={25} $mt={8} $mr={11} $ml={1}>
          <Label $w={123} $ls={-0.15}>Symbol layer type</Label>
          <Select>Simple marker</Select>
        </Row>
        <PropRow $h={25} $mt={13}>
          <Label $pt={1}>Size</Label>
          <Fields $gap={7}>
            <Spin $w={116}>2.000000</Spin>
            <Select>Millimeter</Select>
          </Fields>
          <DdSlot><DdIcon /></DdSlot>
        </PropRow>
        <PropRow $h={28} $mt={8}>
          <Label>Fill color</Label>
          <Fields>
            <ColorBtn><Swatch $c="#e5a148" /></ColorBtn>
            <ColorDrop $w={11}><Caret /></ColorDrop>
          </Fields>
          <DdSlot><DdIcon /></DdSlot>
        </PropRow>
        <PropRow $h={27} $mt={7}>
          <Label>Stroke color</Label>
          <Fields>
            <ColorBtn><Swatch $c="#232323" /></ColorBtn>
            <ColorDrop $w={11}><Caret /></ColorDrop>
          </Fields>
          <DdSlot><DdIcon /></DdSlot>
        </PropRow>
        <PropRow $h={24} $mt={7}>
          <Label>Stroke style</Label>
          <Combo>
            <LineSample />
            <ComboText>Solid Line</ComboText>
            <Caret />
          </Combo>
          <DdSlot><DdIcon /></DdSlot>
        </PropRow>
        <PropRow $h={24} $mt={9}>
          <Label>Stroke width</Label>
          <Fields $gap={7}>
            <Spin $w={116} dim>Hairline</Spin>
            <Select>Millimeter</Select>
          </Fields>
          <DdSlot><DdIcon /></DdSlot>
        </PropRow>
        <PropRow $h={24} $mt={8}>
          <Label>Join style</Label>
          <Combo>
            <BevelIcon />
            <ComboText>Bevel</ComboText>
            <Caret />
          </Combo>
          <DdSlot><DdIcon /></DdSlot>
        </PropRow>
        <PropRow $h={24} $mt={9}>
          <Label>Rotation</Label>
          <Spin>0.00 °</Spin>
          <DdSlot><DdIcon /></DdSlot>
        </PropRow>
        <PropRow $h={56} $mt={8}>
          <Label>Offset</Label>
          <Fields>
            <FieldStack>
              <StackRow><StackLetter>x</StackLetter><Spin>0.000000</Spin></StackRow>
              <StackRow><StackLetter>y</StackLetter><Spin>0.000000</Spin></StackRow>
            </FieldStack>
            <CenterUnit>
              <Select $h={25}>Millimeter</Select>
            </CenterUnit>
          </Fields>
          <DdSlot><DdIcon /></DdSlot>
        </PropRow>
        <PropRow $h={57} $mt={8}>
          <Label $pt={8}>Anchor point</Label>
          <ColumnStack>
            <StackedField><Select>VCenter</Select></StackedField>
            <StackedField><Select>HCenter</Select></StackedField>
          </ColumnStack>
          <DdColumn><DdIcon /><DdIcon /></DdColumn>
        </PropRow>
        <Row $h={113} $mt={14} $ml={10}>
          <ShapeGrid><ShapeCells /></ShapeGrid>
          <DdSlot><DdIcon /></DdSlot>
        </Row>
        <EnableRow $h={24} $mt={13} $gap={5}>
          <Tick />
          <OptionText $w={95}>Enable layer</OptionText>
          <DdIcon />
          <Check $ml={35} />
          <OptionText $w={96} $ml={1}>Draw effects</OptionText>
          <SmallBtn $w={24}><StarBtnIcon /></SmallBtn>
        </EnableRow>
        <BottomBar h={25} mt={24} live={13} undoW={24} gap={6} applyW={81} />
      </Content>
    </Main>
  </Window>
);

const Annotations = () => (
  <>
    <Highlight $x={46} $y={60} $w={431} $h={25} $b={4} />
    <Highlight $x={131} $y={88} $w={321} $h={26} $b={4} />
    <Highlight $x={236} $y={206} $w={182} $h={47} $b={4} />
    <Highlight $x={46} $y={574} $w={92} $h={37} $b={4} />
    <Highlight $x={661} $y={93} $w={260} $h={26} $b={4} />
    <Highlight $x={605} $y={295} $w={384} $h={26} $b={4} />
    <Highlight $x={555} $y={463} $w={361} $h={148} />
    <Highlight $x={1198} $y={116} $w={250} $h={26} $b={4} />
    <Highlight $x={1221} $y={240} $w={284} $h={25} />
    <ArrowSvg width="1527" height="863" viewBox="0 0 1527 863">
      <path d="M75.5 268L93 296H84V375H66V296H58Z" fill={RED} />
      <path d="M450.5 139L468 210H459V420H442V210H433Z" fill={RED} />
    </ArrowSvg>
    <Note $x={68} $y={375}>Double click individual symbol</Note>
    <Note $x={208} $y={424}>Or select Symbol Change</Note>
  </>
);

const App = () => (
  <Canvas>
    <Global />
    <CategorizedPanel />
    <MarkerPanel />
    <SimplePanel />
    <Annotations />
  </Canvas>
);

export default App;
